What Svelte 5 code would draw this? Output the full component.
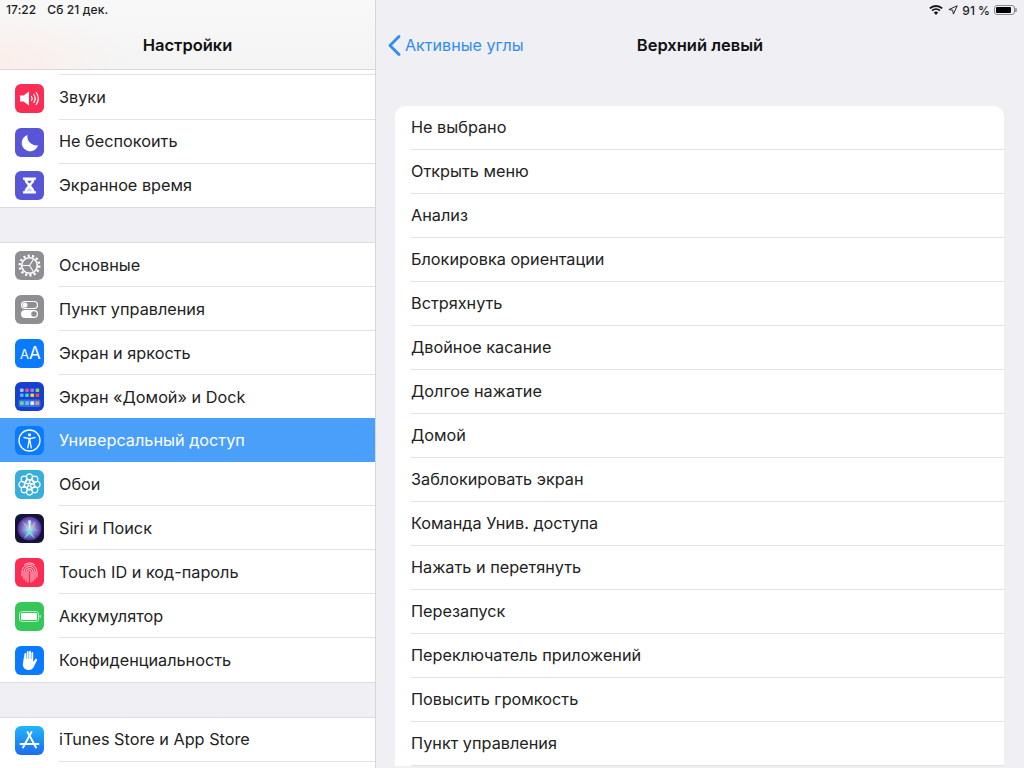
<script>
    const firstGroup = [
        { id: "sounds", label: "Звуки", color: "#fc2d55" },
        { id: "moon", label: "Не беспокоить", color: "#5856d6" },
        { id: "hourglass", label: "Экранное время", color: "#5856d6" },
    ];

    const secondGroup = [
        { id: "gear", label: "Основные", color: "#8e8e93" },
        { id: "toggles", label: "Пункт управления", color: "#8e8e93" },
        { id: "display", label: "Экран и яркость", color: "#0a7aff" },
        { id: "home", label: "Экран «Домой» и Dock", color: "#1540d0" },
        { id: "access", label: "Универсальный доступ", color: "#0a7aff", selected: true },
        { id: "flower", label: "Обои", color: "#38aedb" },
        { id: "siri", label: "Siri и Поиск", color: "#14143a" },
        { id: "touch", label: "Touch ID и код-пароль", color: "#fc2d55" },
        { id: "battery", label: "Аккумулятор", color: "#35c759" },
        { id: "hand", label: "Конфиденциальность", color: "#0a7aff" },
    ];

    const options = [
        "Не выбрано",
        "Открыть меню",
        "Анализ",
        "Блокировка ориентации",
        "Встряхнуть",
        "Двойное касание",
        "Долгое нажатие",
        "Домой",
        "Заблокировать экран",
        "Команда Унив. доступа",
        "Нажать и перетянуть",
        "Перезапуск",
        "Переключатель приложений",
        "Повысить громкость",
        "Пункт управления",
    ];

    const dockDots = ["#a9bdf5", "#ec4f8a", "#a070f5", "#86d65e", "#38bdf5", "#38d8c4", "#f8cc44", "#f54d42"];

    // petals of the wallpaper flower
    const outerPetals = [0, 45, 90, 135, 180, 225, 270, 315].map((a) => ({
        x: 14.5 + 7.6 * Math.cos((a * Math.PI) / 180),
        y: 14.5 + 7.6 * Math.sin((a * Math.PI) / 180),
    }));
    const innerPetals = [22, 94, 166, 238, 310].map((a) => ({
        x: 14.5 + 3.4 * Math.cos((a * Math.PI) / 180),
        y: 14.5 + 3.4 * Math.sin((a * Math.PI) / 180),
    }));
</script>

{#snippet icon(id, color)}
    <svg class="icon" viewBox="0 0 29 29" style="background:{color}">
        {#if id === "sounds"}
            <path d="M5 11.500h3.500L14 7.500v14l-5.500-4H5z" fill="#fff" />
            <g fill="none" stroke="#fff" stroke-width="1.200" stroke-linecap="round">
                <path d="M16.500 12.500a3.500 3.500 0 0 1 0 4" />
                <path d="M18.800 10.500a7 7 0 0 1 0 8" />
                <path d="M21.200 8.500a10.500 10.500 0 0 1 0 12" />
            </g>
        {:else if id === "moon"}
            <path d="M12.500 7a8.300 8.300 0 1 0 10.500 10.300A9 9 0 0 1 12.500 7z" fill="#fff" />
        {:else if id === "hourglass"}
            <path d="M8 6.500h13v2.200h-1.600c0 3.300-3.100 4.300-3.100 5.800s3.100 2.500 3.100 5.800H21v2.200H8v-2.200h1.600c0-3.300 3.100-4.300 3.100-5.800s-3.100-2.500-3.100-5.800H8z" fill="#fff" />
            <path d="M12.300 9.800h4.400c-.3 1.200-1.300 1.900-2.200 2.600-.9-.7-1.900-1.400-2.200-2.600z" fill="#5856d6" />
            <path d="M14.500 16.800c.7.8 2.300 1.800 2.600 3.500h-5.200c.3-1.700 1.900-2.700 2.600-3.500z" fill="#5856d6" opacity=".3" />
        {:else if id === "gear"}
            <circle cx="14.500" cy="14.500" r="9.800" fill="none" stroke="#fff" stroke-width="2.400" stroke-dasharray="2.200 2.200" />
            <circle cx="14.500" cy="14.500" r="7.800" fill="none" stroke="#fff" stroke-width="1.600" />
            <path d="M14.500 14.500H7.500M14.500 14.500l3.800-6M14.500 14.500l3.800 6" stroke="#fff" stroke-width="1.100" fill="none" />
        {:else if id === "toggles"}
            <rect x="6.500" y="6.500" width="16" height="7" rx="3.500" fill="none" stroke="#fff" stroke-width="1.200" />
            <circle cx="10" cy="10" r="2.500" fill="#fff" />
            <rect x="6" y="15" width="17" height="8" rx="4" fill="#fff" />
            <circle cx="19" cy="19" r="2.800" fill="#8e8e93" />
        {:else if id === "display"}
            <text x="5" y="20" class="aa small">A</text>
            <text x="14" y="20" class="aa">A</text>
        {:else if id === "home"}
            {#each dockDots as dot, i}
                <rect x={5 + (i % 4) * 5.200} y={6.500 + Math.floor(i / 4) * 5} width="3.600" height="3.600" rx=".8" fill={dot} />
            {/each}
            <rect x="3.500" y="17.500" width="22" height="7.500" rx="2" fill="#3d6de0" />
            <rect x="5" y="19.300" width="3.800" height="3.800" rx=".8" fill="#66d98a" />
            <rect x="10.200" y="19.300" width="3.800" height="3.800" rx=".8" fill="#5cc7f5" />
            <rect x="15.400" y="19.300" width="3.800" height="3.800" rx=".8" fill="#e6edf8" />
            <rect x="20.400" y="19.300" width="3.800" height="3.800" rx=".8" fill="#e09a5a" />
        {:else if id === "access"}
            <circle cx="14.500" cy="14.500" r="10.500" fill="none" stroke="#fff" stroke-width="1.300" />
            <circle cx="14.500" cy="8.800" r="1.600" fill="#fff" />
            <path d="M9 11.500l3.800.8h3.400l3.800-.8" fill="none" stroke="#fff" stroke-width="1.300" stroke-linecap="round" stroke-linejoin="round" />
            <path d="M13.400 12.300h2.200v4.200h-2.200z" fill="#fff" />
            <path d="M13.900 16l-1.200 5.800M15.100 16l1.200 5.800" fill="none" stroke="#fff" stroke-width="1.300" stroke-linecap="round" />
        {:else if id === "flower"}
            <g fill="none" stroke="#fff" stroke-width="1.100">
                {#each outerPetals as p}
                    <circle cx={p.x} cy={p.y} r="3" />
                {/each}
                {#each innerPetals as p}
                    <circle cx={p.x} cy={p.y} r="2.100" />
                {/each}
            </g>
        {:else if id === "siri"}
            <defs>
                <radialGradient id="siriGlow">
                    <stop offset="0" stop-color="#f2fbff" />
                    <stop offset=".3" stop-color="#74c8dc" />
                    <stop offset=".7" stop-color="#7560c4" />
                    <stop offset=".92" stop-color="#5a3a9c" />
                    <stop offset="1" stop-color="#3a2c78" />
                </radialGradient>
            </defs>
            <circle cx="14.500" cy="14.500" r="12" fill="url(#siriGlow)" />
            <path d="M14.500 14.500L7 6.500l4.500 8.500-8 3zM14.500 14.500L21 6.500l-2.500 8 7 3z" fill="#f0a0d0" opacity=".75" />
            <path d="M14.500 14.500L9 25l5.500-5 5.500 5z" fill="#70e8dc" opacity=".8" />
            <path d="M14.500 14.500L13 6.500h3z" fill="#fff" opacity=".85" />
        {:else if id === "touch"}
            <g fill="none" stroke="#fff" stroke-opacity=".8" stroke-width=".9" stroke-linecap="round">
                <path d="M7 18v-4a7.500 7.500 0 0 1 15 0v5" />
                <path d="M9 21v-7a5.500 5.500 0 0 1 11 0v7" />
                <path d="M11 23v-9a3.500 3.500 0 0 1 7 0v9" />
                <path d="M13 24v-10a1.500 1.500 0 0 1 3 0v10" />
                <path d="M9.500 6.500a9 9 0 0 1 10 0" />
            </g>
        {:else if id === "battery"}
            <rect x="4.500" y="9.500" width="19" height="10" rx="2.500" fill="none" stroke="#fff" stroke-opacity=".65" stroke-width="1" />
            <rect x="6" y="11" width="16" height="7" rx="1.200" fill="#fff" />
            <rect x="24.500" y="13" width="1.200" height="3" rx=".6" fill="#fff" fill-opacity=".65" />
        {:else if id === "hand"}
            <path d="M9.500 7.800c0-1.200 1.800-1.200 1.800 0V13h.5V6c0-1.200 1.800-1.200 1.800 0v7h.5V5.600c0-1.200 1.800-1.200 1.800 0V13h.5V7c0-1.200 1.800-1.200 1.800 0v9l2-2.700c.8-1.100 2.500-.2 1.800 1l-2.900 6c-1 2.100-2.600 3.700-5.400 3.700-3.600 0-5.900-2.200-5.900-6z" fill="#fff" />
        {:else if id === "store"}
            <g fill="none" stroke="#fff" stroke-width="1.900" stroke-linecap="round">
                <path d="M16.500 6L8 21.500" />
                <path d="M12.500 6L21 21.500" />
                <path d="M5.500 18h18" />
            </g>
        {/if}
    </svg>
{/snippet}

{#snippet row(item)}
    <div class="row" class:selected={item.selected}>
        {@render icon(item.id, item.color)}
        <div class="row-label">{item.label}</div>
    </div>
{/snippet}

<div class="screen">
    <aside class="sidebar">
        <header class="side-head">
            <div class="status-left">
                <span>17:22</span>
                <span>Сб 21 дек.</span>
            </div>
            <h1>Настройки</h1>
        </header>

        <div class="peek"><div class="peek-line"></div></div>
        <section class="group first">
            {#each firstGroup as item}
                {@render row(item)}
            {/each}
        </section>

        <section class="group main">
            {#each secondGroup as item}
                {@render row(item)}
            {/each}
        </section>

        <section class="group last">
            <div class="row">
                {@render icon("store", "linear-gradient(#22b5fb, #1b6cf0)")}
                <div class="row-label">iTunes Store и App Store</div>
            </div>
            <div class="row">
                <div class="icon blank"></div>
                <div class="row-label"></div>
            </div>
        </section>
    </aside>

    <main class="detail">
        <div class="status-right">
            <svg class="wifi" viewBox="0 0 14 10">
                <path d="M7 10L4.800 7.500a3.200 3.200 0 0 1 4.400 0zM3.700 6.300L2.500 5a6.700 6.700 0 0 1 9 0l-1.200 1.300a5 5 0 0 0-6.600 0zM1.500 4L.2 2.700a10 10 0 0 1 13.600 0L12.500 4a8.200 8.200 0 0 0-11 0z" fill="#111" />
            </svg>
            <svg class="arrow" viewBox="0 0 10 10">
                <path d="M9.200.8L.9 4.600l3.800.6.700 3.900z" fill="none" stroke="#222" stroke-width="1" stroke-linejoin="round" />
            </svg>
            <span>91 %</span>
            <div class="batt"><div class="batt-fill"></div></div>
        </div>

        <nav class="detail-head">
            <div class="back">
                <svg class="chevron" viewBox="0 0 13 21">
                    <path d="M11 1.500L2 10.500l9 9" fill="none" stroke="#2f8cf0" stroke-width="2.800" stroke-linecap="round" stroke-linejoin="round" />
                </svg>
                <span>Активные углы</span>
            </div>
            <h2>Верхний левый</h2>
        </nav>

        <div class="card">
            {#each options as option}
                <div class="option">{option}</div>
            {/each}
        </div>
    </main>
</div>

<style>
    :global(body) {
        margin: 0;
        background: #efeff4;
    }

    .screen {
        display: flex;
        width: 1024px;
        height: 768px;
        overflow: hidden;
        background: #efeff4;
        font-family: Inter, "Noto Sans", sans-serif;
        color: #1c1c1e;
    }

    .sidebar {
        flex: 0 0 375px;
        border-right: 1px solid #d6d6da;
        background: #efeff4;
    }

    .side-head {
        height: 70px;
        box-sizing: border-box;
        padding-top: 3px;
        border-bottom: 1px solid #d8d8da;
        background:
            radial-gradient(ellipse 130px 50px at 0 62px, #fbeeea, transparent),
            linear-gradient(#f8f8f8, #f4f4f4);
    }

    .status-left {
        display: flex;
        gap: 11px;
        padding-left: 6px;
        font-size: 12px;
        line-height: 14px;
        font-weight: 500;
        letter-spacing: 0.1px;
    }

    h1 {
        margin: 12px 0 0;
        font-size: 16.500px;
        line-height: 32px;
        font-weight: 600;
        text-align: center;
        color: #111;
    }

    .peek {
        height: 6px;
        background: #fff;
    }

    .peek-line {
        height: 5px;
        margin-left: 59px;
        box-sizing: border-box;
        border-bottom: 1px solid #e2e2e5;
    }

    .group {
        margin-bottom: 34px;
        background: #fff;
        border-bottom: 1px solid #dcdce0;
    }

    .group.main,
    .group.last {
        border-top: 1px solid #dcdce0;
    }

    .row {
        display: flex;
        align-items: center;
        height: 44px;
        padding-left: 15px;
        background: #fff;
    }

    .first .row:last-child,
    .first .row:last-child .row-label {
        height: 43px;
    }

    /* the row above the highlight is one pixel short */
    .row:has(+ .selected),
    .row:has(+ .selected) .row-label {
        height: 43px;
    }

    .row:has(+ .selected) .row-label {
        border-bottom: 0;
    }

    .icon {
        flex: 0 0 29px;
        width: 29px;
        height: 29px;
        border-radius: 6px;
    }

    .icon.blank {
        visibility: hidden;
    }

    .row-label {
        flex: 1;
        height: 44px;
        margin-left: 15px;
        box-sizing: border-box;
        border-bottom: 1px solid #e2e2e5;
        font-size: 16.250px;
        line-height: 43px;
        color: #222;
    }

    .main .row-label {
        line-height: 45px;
    }

    .row:last-child .row-label {
        border-bottom: 0;
    }

    .row.selected {
        background: #4a9ffa;
    }

    .row.selected .row-label {
        border-bottom: 0;
        color: #fff;
    }

    .aa {
        font-family: Inter, sans-serif;
        fill: #fff;
        font-size: 17px;
    }

    .aa.small {
        font-size: 13px;
    }

    .detail {
        flex: 1;
        min-width: 0;
    }

    .status-right {
        display: flex;
        justify-content: flex-end;
        align-items: center;
        gap: 4px;
        height: 20px;
        padding-right: 9px;
        font-size: 12px;
        font-weight: 500;
    }

    .wifi {
        width: 14px;
        height: 10px;
        margin-right: 1px;
    }

    .arrow {
        width: 10px;
        height: 10px;
    }

    .batt {
        position: relative;
        width: 21px;
        height: 10px;
        padding: 1px;
        box-sizing: border-box;
        border: 1px solid #8a8a8e;
        border-radius: 3px;
    }

    .batt::after {
        content: "";
        position: absolute;
        right: -3px;
        top: 2px;
        width: 2px;
        height: 4px;
        border-radius: 0 1px 1px 0;
        background: #a0a0a4;
    }

    .batt-fill {
        width: 91%;
        height: 100%;
        border-radius: 1px;
        background: #000;
    }

    .detail-head {
        position: relative;
        display: flex;
        align-items: center;
        justify-content: center;
        height: 50px;
    }

    .back {
        position: absolute;
        left: 12px;
        top: 14px;
        display: flex;
        align-items: center;
        gap: 4px;
        font-size: 16.100px;
        line-height: 22px;
        color: #2f8cf0;
    }

    .chevron {
        width: 13px;
        height: 21px;
    }

    h2 {
        margin: 0;
        font-size: 16.500px;
        font-weight: 600;
        text-align: center;
        color: #111;
    }

    .card {
        margin: 36px 20px 0 19px;
        padding-left: 16px;
        border-radius: 10px 10px 0 0;
        background: #fff;
    }

    .option {
        height: 44px;
        box-sizing: border-box;
        border-bottom: 1px solid #e2e2e5;
        font-size: 16.250px;
        line-height: 43px;
        color: #222;
    }
</style>
